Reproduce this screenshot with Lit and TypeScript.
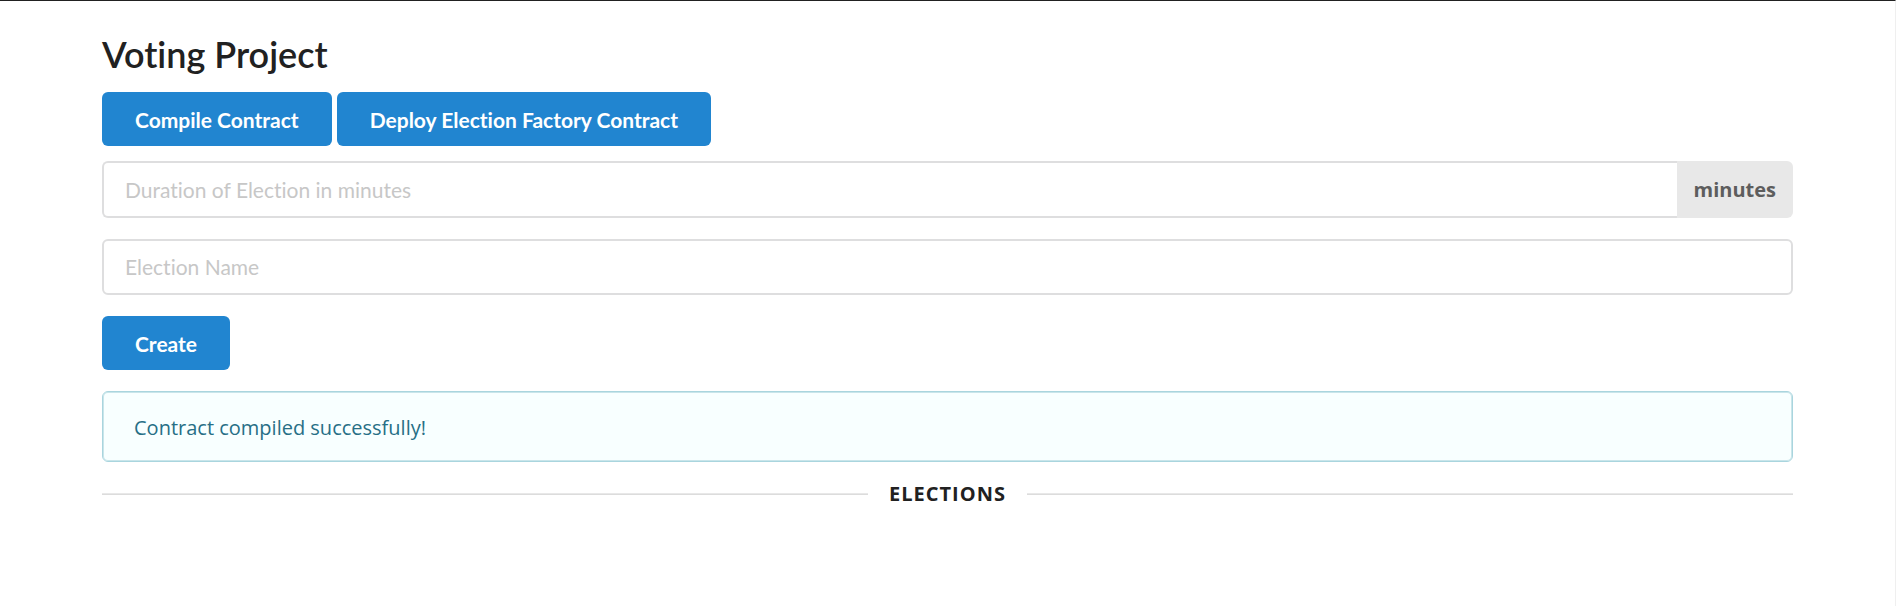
import { LitElement, html, css } from "lit";
import { customElement, state } from "lit/decorators.js";

@customElement("app-root")
export class AppRoot extends LitElement {
  static styles = css`
    :host {
      display: block;
      box-sizing: border-box;
      min-height: 100vh;
      border-top: 1px solid #212121;
      border-right: 1px solid #efefef;
      background: #fff;
      color: #212121;
      font-family: "Open Sans", "Noto Sans", sans-serif;
      font-size: 20px;
      line-height: 30px;
      font-variant-ligatures: none;
    }
    *,
    *::before,
    *::after {
      box-sizing: border-box;
    }
    .page {
      padding: 30px 102px;
    }
    .title {
      margin: 0 0 15px;
      font-family: Lato, sans-serif;
      font-size: 36px;
      line-height: 46px;
      font-weight: 600;
    }
    .actions {
      display: flex;
      flex-wrap: wrap;
      gap: 5px;
      margin-bottom: 15px;
    }
    .button {
      border: 0;
      border-radius: 6px;
      padding: 17px 33px 15px;
      background: #2185d0;
      color: #fff;
      font-family: Lato, sans-serif;
      font-size: 21px;
      line-height: 22px;
      font-weight: 700;
      font-variant-ligatures: none;
      cursor: pointer;
    }
    .form {
      display: flex;
      flex-direction: column;
      align-items: stretch;
      gap: 21px;
      margin-bottom: 21px;
    }
    .field {
      display: flex;
    }
    .input {
      flex: 1;
      min-width: 0;
      border: 2px solid #dededf;
      border-radius: 6px;
      padding: 13px 21px;
      background: #fff;
      color: #212121;
      font-family: Lato, sans-serif;
      font-size: 21px;
      line-height: 26px;
      font-variant-ligatures: none;
      outline: 0;
    }
    .input::placeholder {
      color: #c7c7c7;
      opacity: 1;
    }
    .labeled .input {
      border-right: 0;
      border-radius: 6px 0 0 6px;
    }
    .unit {
      border-radius: 0 6px 6px 0;
      padding: 15px 17px;
      background: #e8e8e8;
      color: #5d5d5d;
      line-height: 27px;
      font-weight: 700;
    }
    .submit {
      align-self: flex-start;
    }
    .message {
      margin: 0 0 17px;
      border: 1px solid #a9d5de;
      border-radius: 6px;
      padding: 21px 31px 18px;
      background: #f8ffff;
      box-shadow: inset 0 0 0 1px #c9e5ea;
      color: #276f86;
    }
    .divider {
      display: flex;
      align-items: center;
      gap: 21px;
      margin: 0;
      font-size: 20px;
      line-height: 30px;
      font-weight: 700;
      letter-spacing: 1px;
      text-transform: uppercase;
    }
    .divider::before,
    .divider::after {
      content: "";
      flex: 1;
      border-top: 1px solid #e8e8e8;
      border-bottom: 1px solid #dcdcdc;
    }
  `;

  @state() private message = "";

  constructor() {
    super();
    this.message = "Contract compiled successfully!";
  }

  render() {
    return html`
      <main class="page">
        <h2 class="title">Voting Project</h2>
        <div class="actions">
          <button class="button" type="button">Compile Contract</button>
          <button class="button" type="button">Deploy Election Factory Contract</button>
        </div>
        <form class="form" @submit=${(e: Event) => e.preventDefault()}>
          <div class="field labeled">
            <input class="input" id="duration" type="text" inputmode="numeric" placeholder="Duration of Election in minutes" />
            <label class="unit" for="duration">minutes</label>
          </div>
          <div class="field">
            <input class="input" type="text" aria-label="Election Name" placeholder="Election Name" />
          </div>
          <button class="button submit" type="submit">Create</button>
        </form>
        <p class="message" role="status">${this.message}</p>
        <h4 class="divider">Elections</h4>
      </main>
    `;
  }
}
